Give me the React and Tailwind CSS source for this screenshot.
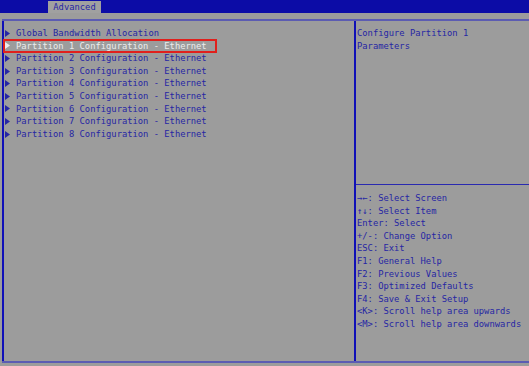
export default function App() {
  const items = [
    "Global Bandwidth Allocation",
    "Partition 1 Configuration - Ethernet",
    "Partition 2 Configuration - Ethernet",
    "Partition 3 Configuration - Ethernet",
    "Partition 4 Configuration - Ethernet",
    "Partition 5 Configuration - Ethernet",
    "Partition 6 Configuration - Ethernet",
    "Partition 7 Configuration - Ethernet",
    "Partition 8 Configuration - Ethernet",
  ];
  const help = [
    "→←: Select Screen",
    "↑↓: Select Item",
    "Enter: Select",
    "+/-: Change Option",
    "ESC: Exit",
    "F1: General Help",
    "F2: Previous Values",
    "F3: Optimized Defaults",
    "F4: Save & Exit Setup",
    "<K>: Scroll help area upwards",
    "<M>: Scroll help area downwards",
  ];
  const Tri = ({ color }) => (
    <svg width="5" height="7" viewBox="0 0 5 7" className="shrink-0">
      <polygon points="0,0 5,3.5 0,7" fill={color} />
    </svg>
  );
  return (
    <div
      className="w-[529px] h-[366px] bg-[#9c9c9c] flex flex-col overflow-hidden text-[#2626a4] text-[8.8px] leading-[12.6px]"
      style={{ fontFamily: '"DejaVu Sans Mono", "Liberation Mono", monospace' }}
    >
      <div className="h-[13px] bg-[#0c0ca6] flex items-end shrink-0">
        <div className="ml-[48px] w-[53px] h-[12px] bg-[#a0a0a0] flex items-center justify-center text-[#2626a4]">
          Advanced
        </div>
      </div>
      <div className="h-[6px] shrink-0" />
      <div className="ml-[2px] h-[344px] border-t-2 border-b-2 border-[#5c5cb2] flex shrink-0">
        <div className="w-[2px] bg-[#1010b8] shrink-0" />
        <div className="w-[350px] pt-[6px] shrink-0">
          {items.map((t, i) =>
            i === 1 ? (
              <div key={i} className="relative flex items-center h-[12.6px] text-[#ececec]">
                <div className="absolute -top-[1px] -bottom-[1px] -left-[1px] w-[214px] border-2 border-[#e0201c]" />
                <div className="ml-[1px]"><Tri color="#ececec" /></div>
                <span className="ml-[6px]">{t}</span>
              </div>
            ) : (
              <div key={i} className="flex items-center h-[12.6px]">
                <div className="ml-[1px]"><Tri color="#2626a4" /></div>
                <span className="ml-[6px]">{t}</span>
              </div>
            )
          )}
        </div>
        <div className="w-[2px] bg-[#1010b8] shrink-0" />
        <div className="flex-1 flex flex-col">
          <div className="h-[164px] pt-[6px] pl-[1px] border-b border-[#2a2ab0]">
            <div>Configure Partition 1</div>
            <div>Parameters</div>
          </div>
          <div className="pt-[7px] pl-[1px]">
            {help.map((t, i) => (
              <div key={i} className="whitespace-pre">{t}</div>
            ))}
          </div>
        </div>
      </div>
    </div>
  );
}
